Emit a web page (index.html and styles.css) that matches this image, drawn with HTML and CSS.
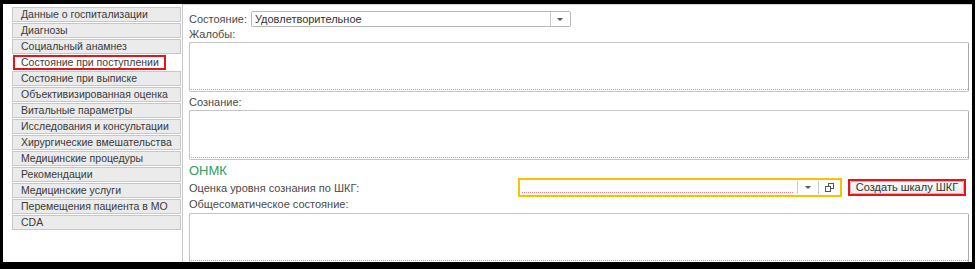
FILE: index.html
```html
<!DOCTYPE html>
<html lang="ru">
<head>
    <meta charset="UTF-8">
    <meta name="viewport" content="width=device-width, initial-scale=1.0">
    <title>Состояние при поступлении</title>
    <link rel="stylesheet" href="styles.css">
</head>
<body>
    <div class="frame">
        <div class="side">
            <div class="tab">Данные о госпитализации</div>
            <div class="tab">Диагнозы</div>
            <div class="tab">Социальный анамнез</div>
            <div class="tab active">Состояние при поступлении</div>
            <div class="tab">Состояние при выписке</div>
            <div class="tab">Объективизированная оценка</div>
            <div class="tab">Витальные параметры</div>
            <div class="tab">Исследования и консультации</div>
            <div class="tab">Хирургические вмешательства</div>
            <div class="tab">Медицинские процедуры</div>
            <div class="tab">Рекомендации</div>
            <div class="tab">Медицинские услуги</div>
            <div class="tab">Перемещения пациента в МО</div>
            <div class="tab">CDA</div>
        </div>
        <div class="main">
            <div class="row state">
                <span class="lbl">Состояние:</span>
                <div class="select">
                    <span class="val">Удовлетворительное</span>
                    <span class="drop"><i class="arrow"></i></span>
                </div>
            </div>
            <div class="cap">Жалобы:</div>
            <div class="area"></div>
            <div class="cap gap">Сознание:</div>
            <div class="area"></div>
            <div class="group">ОНМК</div>
            <div class="row gcs">
                <span class="lbl wide">Оценка уровня сознания по ШКГ:</span>
                <div class="pick">
                    <span class="val empty"></span>
                    <span class="drop sep"><i class="arrow"></i></span>
                    <span class="open sep">
                        <svg width="9" height="9" viewBox="0 0 9 9">
                            <rect x="3.5" y="0.5" width="5" height="5" fill="#fff" stroke="#555"/>
                            <rect x="0.5" y="3.5" width="5" height="5" fill="#fff" stroke="#555"/>
                        </svg>
                    </span>
                </div>
                <div class="mark">
                    <button class="cmd">Создать шкалу ШКГ</button>
                </div>
            </div>
            <div class="cap">Общесоматическое состояние:</div>
            <div class="area last"></div>
        </div>
    </div>
</body>
</html>
```

FILE: styles.css
```css
body {
    margin: 0;
    background-color: #fff;
    font-family: "Liberation Sans", Arial, sans-serif;
    font-size: 11px;
    color: #333;
}
.frame {
    display: flex;
    width: 975px;
    height: 269px;
    box-sizing: border-box;
    border: 3px solid #000;
    border-top-width: 4px;
    border-bottom-width: 7px;
    overflow: hidden;
}
.side {
    width: 169px;
    padding: 3px 1px 0 9px;
    border-right: 1px solid #c9c9c9;
    flex-shrink: 0;
}
.tab {
    height: 15px;
    box-sizing: border-box;
    margin-bottom: 1px;
    padding-left: 8px;
    line-height: 13px;
    font-size: 10.5px;
    background-color: #ebebeb;
    border: 1px solid #c8c8c8;
    color: #3a3a3a;
    white-space: nowrap;
}
.tab.active {
    width: 153px;
    margin-left: 1px;
    padding-left: 6px;
    line-height: 11px;
    background-color: #fff;
    border: 2px solid #e8141b;
}
.main {
    flex: 1;
    border-top: 1px solid #d4d4d4;
    padding: 6px 3px 0 6px;
    overflow: hidden;
}
.row {
    display: flex;
    align-items: center;
}
.lbl {
    color: #4a4a4a;
    white-space: nowrap;
}
.state .lbl {
    margin-right: 4px;
}
.select {
    display: flex;
    width: 320px;
    height: 16px;
    box-sizing: border-box;
    border: 1px solid #b8b8b8;
    border-radius: 2px;
}
.val {
    flex: 1;
    padding-left: 3px;
    line-height: 14px;
    color: #333;
}
.drop {
    width: 19px;
    display: flex;
    align-items: center;
    justify-content: center;
    border-left: 1px solid #c8c8c8;
}
.arrow {
    width: 0;
    height: 0;
    border-left: 3px solid transparent;
    border-right: 3px solid transparent;
    border-top: 3px solid #555;
}
.cap {
    height: 13px;
    line-height: 13px;
    margin-top: 1px;
    color: #4a4a4a;
}
.cap.gap {
    margin-top: 4px;
}
.area {
    height: 50px;
    box-sizing: border-box;
    margin-top: 1px;
    border: 1px solid #c4c4c4;
    border-right-color: #a8a8a8;
    border-radius: 2px;
    background: linear-gradient(to right, #f08c8c 50%, transparent 50%) left 1px bottom 1px / 2px 1px repeat-x;
    background-clip: padding-box;
}
.area.last {
    margin-top: 2px;
}
.group {
    margin-top: 3px;
    height: 15px;
    line-height: 15px;
    font-size: 13px;
    color: #2f9e62;
}
.gcs {
    height: 19px;
}
.lbl.wide {
    width: 329px;
}
.pick {
    display: flex;
    width: 324px;
    height: 19px;
    box-sizing: border-box;
    border: 2px solid #f5c400;
}
.pick .val {
    margin: 0 3px 2px 2px;
    background: linear-gradient(to right, #f07a7a 50%, transparent 50%) left bottom / 2px 1px repeat-x;
}
.pick .drop {
    width: 20px;
}
.sep {
    border-left: 1px solid #c8c8c8;
    margin: 1px 0;
}
.open {
    width: 21px;
    display: flex;
    align-items: center;
    justify-content: center;
}
.mark {
    margin-left: 6px;
    width: 118px;
    height: 17px;
    box-sizing: border-box;
    border: 2px solid #e8141b;
    display: flex;
}
.cmd {
    flex: 1;
    margin: 0;
    padding: 0;
    font-family: "Liberation Sans", Arial, sans-serif;
    font-size: 11px;
    line-height: 11px;
    color: #333;
    background: linear-gradient(#fafafa, #ececec);
    border: 1px solid #bdbdbd;
    border-radius: 2px;
}
```
